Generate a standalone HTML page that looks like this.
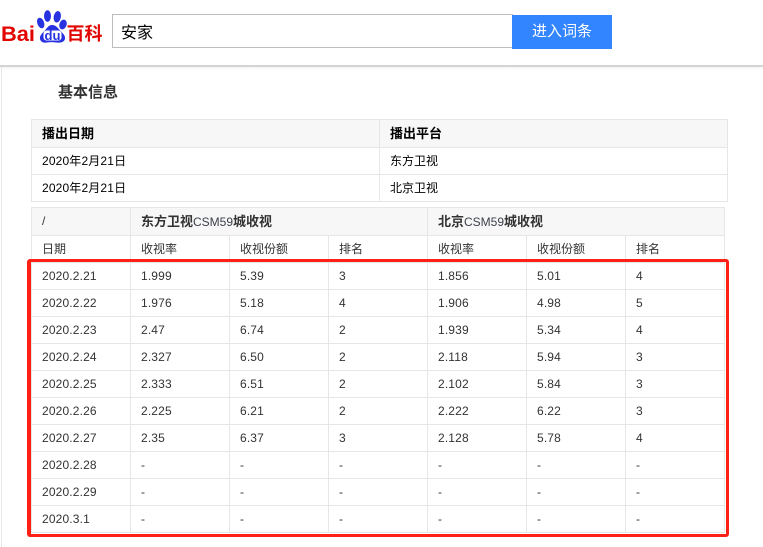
<!DOCTYPE html>
<html><head><meta charset="utf-8">
<style>
*{box-sizing:border-box}
html,body{margin:0;padding:0;background:#fff;width:763px;height:547px;overflow:hidden}
body{position:relative;font-family:"Liberation Sans","Noto Sans CJK SC",sans-serif;font-size:12px;color:#333}
.a{position:absolute;white-space:nowrap}
.l{position:absolute;background:#e6e6e6}
.c{position:absolute;white-space:nowrap;line-height:16px;color:#333;letter-spacing:.15px}
.b{font-weight:bold;font-size:13px;letter-spacing:0;margin-top:1px}
.b span{font-weight:normal;font-size:12px;letter-spacing:0;color:#3a3f4a}
</style></head><body>
<div class="a" style="left:0;top:65px;width:763px;height:2px;background:#d4d4d4"></div>
<div class="a" style="left:0;top:67px;width:763px;height:3px;background:linear-gradient(#f4f4f4,#fff)"></div>
<div class="a" style="left:1px;top:67px;width:1px;height:480px;background:#e6e6e6"></div>

<svg class="a" style="left:0;top:8px" width="104" height="40" viewBox="0 0 104 40">
<text x="1" y="33" font-family="Liberation Sans" font-weight="bold" font-size="21" fill="#e10602" textLength="34" lengthAdjust="spacingAndGlyphs">Bai</text>
<g fill="#2932e1">
<ellipse cx="47.500" cy="8" rx="3.500" ry="5.800"/>
<ellipse cx="57.300" cy="8.800" rx="3.600" ry="5.800" transform="rotate(10 57.300 8.800)"/>
<ellipse cx="40.700" cy="15" rx="3.400" ry="5.500" transform="rotate(-20 40.700 15)"/>
<ellipse cx="63" cy="16.500" rx="3.600" ry="5" transform="rotate(20 63 16.500)"/>
<path d="M52 17C48 17 47 20.500 44.500 23C41 26 39.500 28.500 40 31C41 34.500 44 35 47 34.500C50 34 53 34 56 34.500C60 35 64 34.500 65 31C65.500 27.500 63 25.500 60.500 23C58 20.500 56.500 17 52 17Z"/>
</g>
<rect x="43.500" y="22.500" width="18" height="10" rx="3" fill="#fff"/>
<text x="44.500" y="32" font-family="Liberation Sans" font-weight="bold" font-size="13" fill="#2932e1" textLength="16" lengthAdjust="spacingAndGlyphs">du</text>
<text x="66.500" y="32" font-family="Liberation Sans,Noto Sans CJK SC" font-weight="bold" font-size="18" fill="#e10602" textLength="36" lengthAdjust="spacingAndGlyphs">百科</text>
</svg>

<div class="a" style="left:112px;top:14px;width:401px;height:34px;border:1px solid #bdbdbd;font-size:16px;line-height:36px;padding-left:8px;padding-top:1px;color:#000">安家</div>
<div class="a" style="left:512px;top:15px;width:100px;height:34px;background:#3385ff;color:#fff;font-size:15px;line-height:33px;text-align:center">进入词条</div>

<div class="a" style="left:58px;top:84px;font-size:15px;line-height:18px;font-weight:bold;color:#333">基本信息</div>

<!-- table 1 -->
<div class="a" style="left:31px;top:119px;width:697px;height:28px;background:#f7f7f7"></div>
<div class="l" style="left:31px;top:119px;width:697px;height:1px"></div>
<div class="l" style="left:31px;top:147px;width:697px;height:1px"></div>
<div class="l" style="left:31px;top:174px;width:697px;height:1px"></div>
<div class="l" style="left:31px;top:201px;width:697px;height:1px"></div>
<div class="l" style="left:31px;top:119px;width:1px;height:83px"></div>
<div class="l" style="left:379px;top:119px;width:1px;height:83px"></div>
<div class="l" style="left:727px;top:119px;width:1px;height:83px"></div>
<div class="c b" style="left:42px;top:125px;color:#000">播出日期</div>
<div class="c b" style="left:390px;top:125px;color:#000">播出平台</div>
<div class="c" style="left:42px;top:153px;color:#000">2020年2月21日</div>
<div class="c" style="left:390px;top:153px;color:#000;letter-spacing:0">东方卫视</div>
<div class="c" style="left:42px;top:180px;color:#000">2020年2月21日</div>
<div class="c" style="left:390px;top:180px;color:#000;letter-spacing:0">北京卫视</div>

<!-- table 2 -->
<div class="a" style="left:31px;top:207px;width:694px;height:28px;background:#f7f7f7"></div>
<div class="l" style="left:31px;top:207px;width:694px;height:1px"></div>
<div class="l" style="left:31px;top:235px;width:694px;height:1px"></div>
<div class="l" style="left:31px;top:262px;width:694px;height:1px"></div>
<div class="l" style="left:31px;top:289px;width:694px;height:1px"></div>
<div class="l" style="left:31px;top:316px;width:694px;height:1px"></div>
<div class="l" style="left:31px;top:343px;width:694px;height:1px"></div>
<div class="l" style="left:31px;top:370px;width:694px;height:1px"></div>
<div class="l" style="left:31px;top:397px;width:694px;height:1px"></div>
<div class="l" style="left:31px;top:424px;width:694px;height:1px"></div>
<div class="l" style="left:31px;top:451px;width:694px;height:1px"></div>
<div class="l" style="left:31px;top:478px;width:694px;height:1px"></div>
<div class="l" style="left:31px;top:505px;width:694px;height:1px"></div>
<div class="l" style="left:31px;top:532px;width:694px;height:1px"></div>
<div class="l" style="left:31px;top:207px;width:1px;height:326px"></div>
<div class="l" style="left:130px;top:207px;width:1px;height:326px"></div>
<div class="l" style="left:229px;top:235px;width:1px;height:298px"></div>
<div class="l" style="left:328px;top:235px;width:1px;height:298px"></div>
<div class="l" style="left:427px;top:207px;width:1px;height:326px"></div>
<div class="l" style="left:526px;top:235px;width:1px;height:298px"></div>
<div class="l" style="left:625px;top:235px;width:1px;height:298px"></div>
<div class="l" style="left:724px;top:207px;width:1px;height:326px"></div>

<div class="c" style="left:42px;top:213px">/</div>
<div class="c b" style="left:141px;top:213px">东方卫视<span>CSM59</span>城收视</div>
<div class="c b" style="left:438px;top:213px">北京<span>CSM59</span>城收视</div>
<div class="c" style="left:42px;top:241px;letter-spacing:0">日期</div>
<div class="c" style="left:141px;top:241px;letter-spacing:0">收视率</div>
<div class="c" style="left:240px;top:241px;letter-spacing:0">收视份额</div>
<div class="c" style="left:339px;top:241px;letter-spacing:0">排名</div>
<div class="c" style="left:438px;top:241px;letter-spacing:0">收视率</div>
<div class="c" style="left:537px;top:241px;letter-spacing:0">收视份额</div>
<div class="c" style="left:636px;top:241px;letter-spacing:0">排名</div>

<div class="c" style="left:42px;top:268px">2020.2.21</div><div class="c" style="left:141px;top:268px">1.999</div><div class="c" style="left:240px;top:268px">5.39</div><div class="c" style="left:339px;top:268px">3</div><div class="c" style="left:438px;top:268px">1.856</div><div class="c" style="left:537px;top:268px">5.01</div><div class="c" style="left:636px;top:268px">4</div>
<div class="c" style="left:42px;top:295px">2020.2.22</div><div class="c" style="left:141px;top:295px">1.976</div><div class="c" style="left:240px;top:295px">5.18</div><div class="c" style="left:339px;top:295px">4</div><div class="c" style="left:438px;top:295px">1.906</div><div class="c" style="left:537px;top:295px">4.98</div><div class="c" style="left:636px;top:295px">5</div>
<div class="c" style="left:42px;top:322px">2020.2.23</div><div class="c" style="left:141px;top:322px">2.47</div><div class="c" style="left:240px;top:322px">6.74</div><div class="c" style="left:339px;top:322px">2</div><div class="c" style="left:438px;top:322px">1.939</div><div class="c" style="left:537px;top:322px">5.34</div><div class="c" style="left:636px;top:322px">4</div>
<div class="c" style="left:42px;top:349px">2020.2.24</div><div class="c" style="left:141px;top:349px">2.327</div><div class="c" style="left:240px;top:349px">6.50</div><div class="c" style="left:339px;top:349px">2</div><div class="c" style="left:438px;top:349px">2.118</div><div class="c" style="left:537px;top:349px">5.94</div><div class="c" style="left:636px;top:349px">3</div>
<div class="c" style="left:42px;top:376px">2020.2.25</div><div class="c" style="left:141px;top:376px">2.333</div><div class="c" style="left:240px;top:376px">6.51</div><div class="c" style="left:339px;top:376px">2</div><div class="c" style="left:438px;top:376px">2.102</div><div class="c" style="left:537px;top:376px">5.84</div><div class="c" style="left:636px;top:376px">3</div>
<div class="c" style="left:42px;top:403px">2020.2.26</div><div class="c" style="left:141px;top:403px">2.225</div><div class="c" style="left:240px;top:403px">6.21</div><div class="c" style="left:339px;top:403px">2</div><div class="c" style="left:438px;top:403px">2.222</div><div class="c" style="left:537px;top:403px">6.22</div><div class="c" style="left:636px;top:403px">3</div>
<div class="c" style="left:42px;top:430px">2020.2.27</div><div class="c" style="left:141px;top:430px">2.35</div><div class="c" style="left:240px;top:430px">6.37</div><div class="c" style="left:339px;top:430px">3</div><div class="c" style="left:438px;top:430px">2.128</div><div class="c" style="left:537px;top:430px">5.78</div><div class="c" style="left:636px;top:430px">4</div>
<div class="c" style="left:42px;top:457px">2020.2.28</div><div class="c" style="left:141px;top:457px">-</div><div class="c" style="left:240px;top:457px">-</div><div class="c" style="left:339px;top:457px">-</div><div class="c" style="left:438px;top:457px">-</div><div class="c" style="left:537px;top:457px">-</div><div class="c" style="left:636px;top:457px">-</div>
<div class="c" style="left:42px;top:484px">2020.2.29</div><div class="c" style="left:141px;top:484px">-</div><div class="c" style="left:240px;top:484px">-</div><div class="c" style="left:339px;top:484px">-</div><div class="c" style="left:438px;top:484px">-</div><div class="c" style="left:537px;top:484px">-</div><div class="c" style="left:636px;top:484px">-</div>
<div class="c" style="left:42px;top:511px">2020.3.1</div><div class="c" style="left:141px;top:511px">-</div><div class="c" style="left:240px;top:511px">-</div><div class="c" style="left:339px;top:511px">-</div><div class="c" style="left:438px;top:511px">-</div><div class="c" style="left:537px;top:511px">-</div><div class="c" style="left:636px;top:511px">-</div>

<!-- red highlight -->
<div class="a" style="left:27px;top:259px;width:702px;height:278px;border:3px solid #ff1f14;border-left-width:4px;border-radius:3px"></div>
</body></html>
